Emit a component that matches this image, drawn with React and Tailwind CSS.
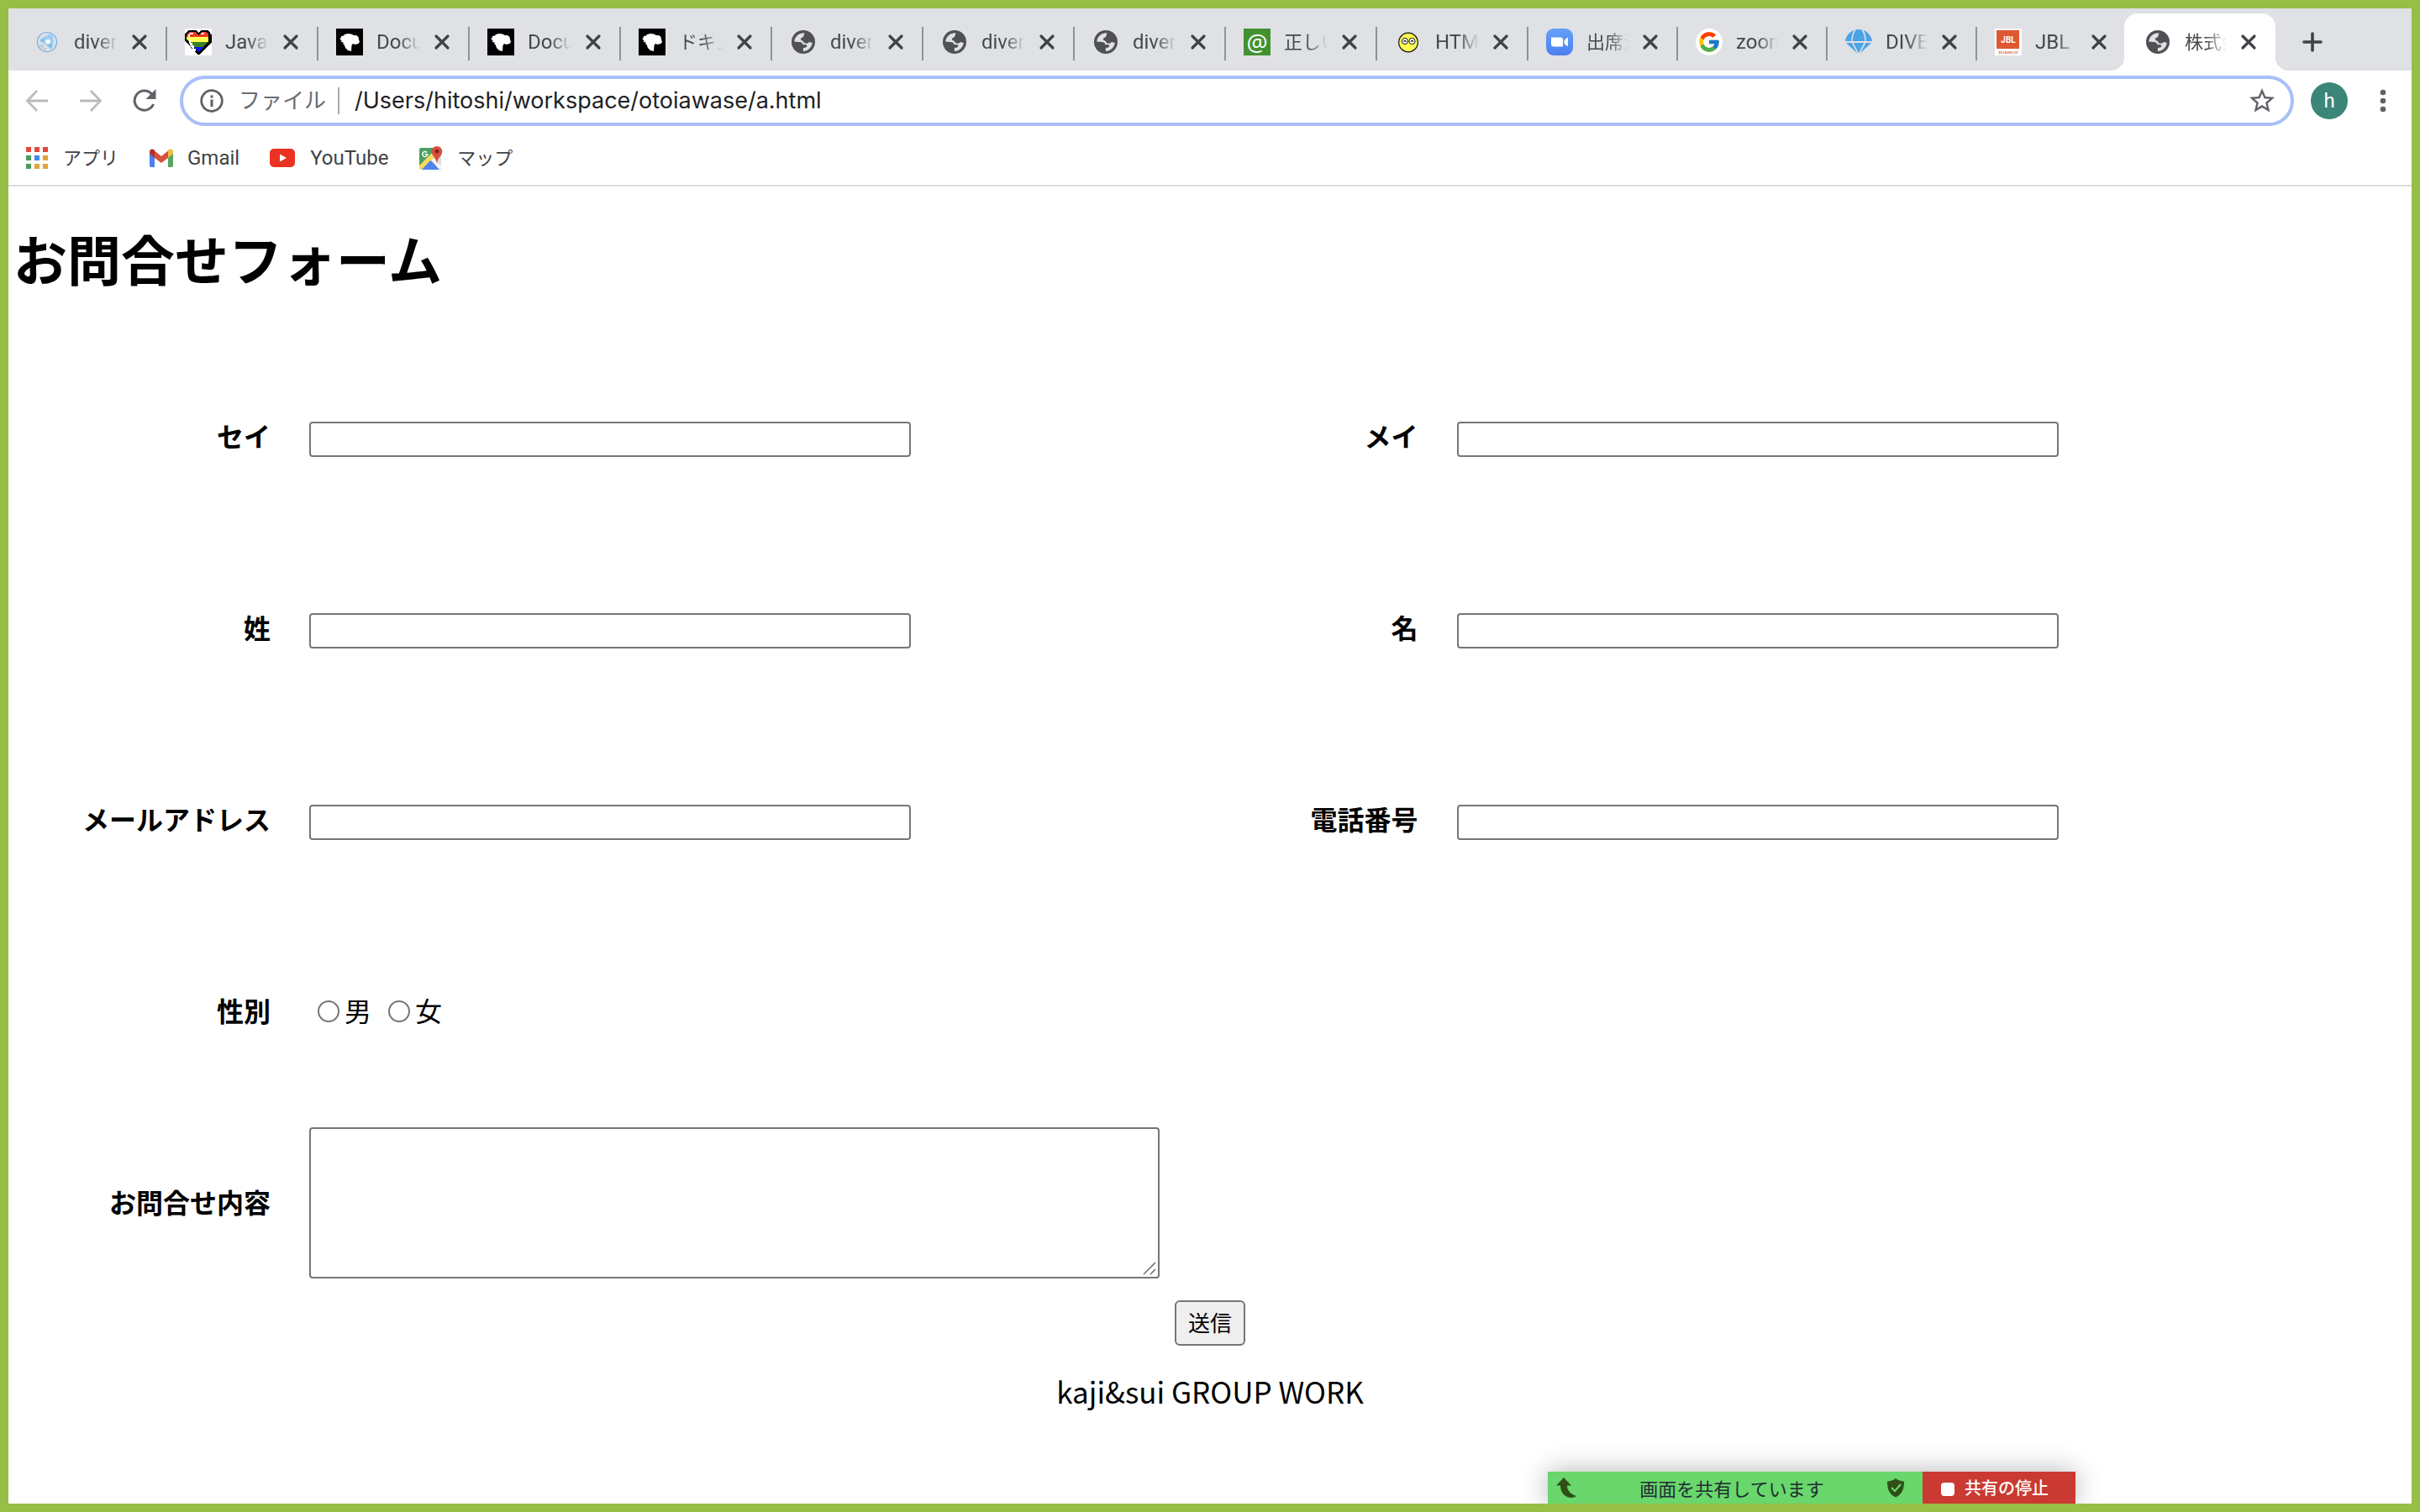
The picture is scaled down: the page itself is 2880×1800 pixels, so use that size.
import React from "react";
import { FcGoogle } from "react-icons/fc";
import { MdStarBorder } from "react-icons/md";

const cjk = "font-['Noto_Sans_CJK_JP',sans-serif]";
const ui = "font-[Roboto,'Noto_Sans_CJK_JP',sans-serif]";

function Rocket() {
  return (
    <svg viewBox="0 0 32 32" className="size-8">
      <circle cx="16" cy="16" r="11.5" fill="none" stroke="#6fb1e6" strokeWidth="1.2" />
      <path d="M22 6c2 5 2 12 0 17-2-1-4-1-6-3-3-1-6-4-8-7 4-3 9-6 14-7z" fill="#9dcdf3" />
      <path d="M13 11l-6 3 4 3zM16 20l5 5 1-7z" fill="#7dbcee" />
      <circle cx="17" cy="15.5" r="2.800" fill="#fff" />
      <path d="M7 22l4-3M8 26l4-5M13 26l1-3" stroke="#c2c6ca" strokeWidth="2" />
    </svg>
  );
}

function Heart() {
  return (
    <svg viewBox="0 0 32 32" className="size-8" shapeRendering="crispEdges">
      <rect width="32" height="32" fill="#fff" />
      <path d="M4 2h9l3 3 3-3h9l4 6v8L18 31h-3L0 14V7z" fill="#000" />
      <path d="M5 4h7l4 4 4-4h6l2 3v3H2V7z" fill="#ee3424" />
      <path d="M2 10h26v5l-1 1H5l-3-3z" fill="#ffff54" />
      <path d="M5 16h22l-5 6H10z" fill="#3b8222" />
      <path d="M10 22h12l-6 6z" fill="#0a16f0" />
      <path d="M7 5h3v2H6v3H4V7zM20 5h3v2h-4zM5 13h2v4h2v3h2v4h2v3h-2l-4-6-2-4z" fill="#fff" />
    </svg>
  );
}

function Lion() {
  return (
    <svg viewBox="0 0 32 32" className="size-8">
      <rect width="32" height="32" fill="#000" />
      <path d="M4 12l2-1.500V9l3-.5 1-1.500 4-1 4 .5 3 1.500h3l2.500 2 .5 3 1 3-1.500 2-4 1-2.500-1-1.500 2-.5 7-4-1-3-3-1.500-4L8 18l1-1.500-3.500-.5 1.500-1.500-2.500-1 1.500-1z" fill="#fff" />
    </svg>
  );
}

function Globe() {
  return (
    <svg viewBox="0 0 32 32" className="size-8">
      <circle cx="16" cy="16" r="14" fill="#505155" />
      <path d="M17.500 5.200C11 5 6 9 5.200 15.500L11 16c3 0 4 1 4.200 3l4 .3c1.500.4 1.300 2.700-.2 3.200l-3 .5-.2 4C21.500 27 26 22.500 26.800 17l-3.800-1-2.200 1.800-4-.6-.6-2c-1-1-3-.7-3.300-2.200-.2-1.400 1.300-2.500 3-2.800z" fill="#dfe1e5" />
    </svg>
  );
}

function AtMark() {
  return (
    <span className="flex size-8 items-center justify-center bg-[#429232] font-['Open_Sans',sans-serif] text-[28px] leading-none text-white">
      @
    </span>
  );
}

function Smiley() {
  return (
    <svg viewBox="0 0 32 32" className="size-8">
      <circle cx="16" cy="16.500" r="11.300" fill="#ffff54" stroke="#111" strokeWidth="1.200" />
      <circle cx="12" cy="15" r="3.600" fill="#fff" stroke="#111" strokeWidth="1" />
      <circle cx="20.500" cy="15" r="3.600" fill="#fff" stroke="#111" strokeWidth="1" />
      <path d="M11 16v-1.500h2V16M19.500 16v-1.500h2V16" fill="none" stroke="#111" />
    </svg>
  );
}

function ZoomCamera() {
  return (
    <svg viewBox="0 0 32 32" className="size-8">
      <defs>
        <linearGradient id="zoomBlue" x1="0" y1="0" x2="0" y2="1">
          <stop offset="0" stopColor="#65a0f8" />
          <stop offset="1" stopColor="#4c80f0" />
        </linearGradient>
      </defs>
      <rect width="32" height="32" rx="9" fill="url(#zoomBlue)" />
      <path d="M6 10.500h11.500c1.500 0 2.500 1 2.500 2.500v8.500H9c-2 0-3-1-3-3zM21.500 14l4.500-3.500v11L21.500 18z" fill="#fff" />
    </svg>
  );
}

function GoogleMark() {
  return (
    <span className="flex size-8 items-center justify-center rounded-full bg-white">
      <FcGoogle className="size-7" />
    </span>
  );
}

function DiveGlobe() {
  return (
    <svg viewBox="0 0 32 32" className="size-8">
      <path d="M0 15C1 7 8 1 16 1s15 6 16 14zM1 17h30L16 31z" fill="#4ba3e8" />
      <path d="M12 1C9 5 8 10 8 16l8 15 8-15c0-6-1-11-4-15M0 16h32" fill="none" stroke="#dfe1e5" strokeWidth="1.600" />
    </svg>
  );
}

function Jbl() {
  return (
    <svg viewBox="0 0 32 32" className="size-8">
      <rect width="32" height="32" fill="#fff" />
      <rect x="2" y="2" width="27" height="22" fill="#de5833" />
      <text x="16" y="17" textAnchor="middle" fontFamily="Roboto" fontWeight="700" fontSize="10" fill="#fff">JBL</text>
      <text x="16" y="30" textAnchor="middle" fontFamily="Liberation Serif" fontWeight="700" fontSize="5" fill="#de5833">HARMAN</text>
    </svg>
  );
}

const tabs = [
  { title: "diver", Icon: Rocket },
  { title: "Java", Icon: Heart },
  { title: "Docu", Icon: Lion },
  { title: "Docu", Icon: Lion },
  { title: "ドキュ", Icon: Lion, wide: true },
  { title: "diver", Icon: Globe },
  { title: "diver", Icon: Globe },
  { title: "diver", Icon: Globe },
  { title: "正しい", Icon: AtMark, wide: true },
  { title: "HTM", Icon: Smiley },
  { title: "出席法", Icon: ZoomCamera, wide: true, narrow: true },
  { title: "zoom", Icon: GoogleMark, narrow: true },
  { title: "DIVE", Icon: DiveGlobe, narrow: true },
  { title: "JBL S", Icon: Jbl, narrow: true, last: true },
];

function TabBody({ title, Icon, wide, narrow }) {
  return (
    <>
      <Icon />
      <span
        className={`ml-4 overflow-hidden whitespace-nowrap text-[#45484c] [mask-image:linear-gradient(to_right,black_50%,transparent)] ${
          wide ? "text-[22px]" : "text-2xl"
        } ${narrow ? "w-[50px]" : "w-[52px]"}`}
      >
        {title}
      </span>
      <button aria-label="タブを閉じる" className="ml-4 flex size-5 items-center justify-center">
        <svg viewBox="0 0 20 20" className="size-5">
          <path d="M3 3l14 14M17 3L3 17" stroke="#3f4246" strokeWidth="3.200" strokeLinecap="round" />
        </svg>
      </button>
    </>
  );
}

function TabStrip() {
  return (
    <div className="flex items-end bg-[#dfe1e5] pt-1.5 pl-[9px]">
      {tabs.map((t, i) => (
        <div key={i} className={`flex h-[68px] min-w-0 items-center ${t.narrow ? "w-[178px]" : "w-[180px]"}`}>
          <div className="flex min-w-0 flex-1 items-center pl-[21px]">
            <TabBody {...t} />
          </div>
          {!t.last && <span className="mt-1 h-10 w-0.5 bg-[#909296]" />}
        </div>
      ))}
      <div className="relative -ml-[3px] flex h-[68px] w-[180px] items-center rounded-t-2xl bg-white pl-6">
        <span className="absolute bottom-0 -left-4 size-4 bg-[radial-gradient(circle_at_0_0,transparent_16px,white_16px)]" />
        <span className="absolute -right-4 bottom-0 size-4 bg-[radial-gradient(circle_at_100%_0,transparent_16px,white_16px)]" />
        <TabBody title="株式会" Icon={Globe} wide narrow />
      </div>
      <button aria-label="新しいタブ" className="ml-7 flex h-[68px] w-8 items-center justify-center">
        <svg viewBox="0 0 24 24" className="size-6">
          <path d="M12 2v20M2 12h20" stroke="#3f4246" strokeWidth="3.600" strokeLinecap="round" />
        </svg>
      </button>
    </div>
  );
}

function Toolbar() {
  return (
    <div className="flex items-center bg-white pt-1.5 pr-[22px] pl-5">
      <button aria-label="戻る">
        <svg viewBox="0 0 28 28" className="size-7" fill="none" stroke="#babcbe" strokeWidth="2.800">
          <path d="M27 14H3M14 2L2.500 14 14 26" />
        </svg>
      </button>
      <button aria-label="進む" className="ml-9">
        <svg viewBox="0 0 28 28" className="size-7" fill="none" stroke="#babcbe" strokeWidth="2.800">
          <path d="M1 14h24M14 2l11.500 12L14 26" />
        </svg>
      </button>
      <button aria-label="再読み込み" className="ml-9">
        <svg viewBox="0 0 28 28" className="size-7">
          <path d="M24.500 18A11.600 11.600 0 1 1 22.500 6" fill="none" stroke="#5f6368" strokeWidth="3" />
          <path d="M27.500 0v12h-12z" fill="#5f6368" />
        </svg>
      </button>
      <div className="ml-7 flex h-[60px] flex-1 items-center rounded-full border-4 border-[#a8c0f7] pr-4 pl-5">
        <svg viewBox="0 0 28 28" className="size-7">
          <circle cx="14" cy="14" r="12.300" fill="none" stroke="#616161" strokeWidth="2.800" />
          <path d="M12.500 12.500h3V21h-3zM12.500 7.500h3v3h-3z" fill="#616161" />
        </svg>
        <span className="ml-[18px] text-[26px] text-[#6a6d71]">ファイル</span>
        <span className="ml-3.5 h-8 w-0.5 bg-[#a8aaad]" />
        <input
          aria-label="アドレス"
          defaultValue="/Users/hitoshi/workspace/otoiawase/a.html"
          className="ml-[18px] min-w-0 flex-1 bg-transparent font-[Inter,sans-serif] text-[27px] text-[#202124] outline-none"
        />
        <button aria-label="ブックマークに追加">
          <MdStarBorder className="size-9 text-[#5f6368]" />
        </button>
      </div>
      <button className="ml-5 flex size-11 items-center justify-center rounded-full bg-[#3b8678] text-2xl text-white">h</button>
      <button aria-label="メニュー" className="ml-[30px] flex w-6 justify-center">
        <svg viewBox="0 0 8 28" className="h-7 w-2" fill="#5f6368">
          <circle cx="4" cy="4" r="3.300" />
          <circle cx="4" cy="14" r="3.300" />
          <circle cx="4" cy="24" r="3.300" />
        </svg>
      </button>
    </div>
  );
}

function Apps() {
  const colors = ["#e2473c", "#e2473c", "#e2473c", "#4b9b5a", "#4285f4", "#e4a338", "#4b9b5a", "#e4a338", "#e4a338"];
  return (
    <svg viewBox="0 0 26 26" className="size-[26px]">
      {colors.map((c, i) => (
        <rect key={i} x={(i % 3) * 10} y={Math.floor(i / 3) * 10} width="6" height="6" fill={c} />
      ))}
    </svg>
  );
}

function Gmail() {
  return (
    <svg viewBox="0 0 30 22" className="h-[22px] w-[30px]">
      <path d="M1 4l6 5v13H3a2 2 0 0 1-2-2z" fill="#4c80ee" />
      <path d="M29 4l-6 5v13h4a2 2 0 0 0 2-2z" fill="#58a65c" />
      <path d="M23 2l1-1c2-1.500 5 0 5 2.500V6l-6 5z" fill="#f0bd42" />
      <path d="M7 2.500l8 6.500 8-6.500V11l-8 6-8-6z" fill="#d85140" />
      <path d="M1 3.500C1 1 4 -.5 6 1l1 1v9L1 6z" fill="#b3322a" />
    </svg>
  );
}

function YouTube() {
  return (
    <svg viewBox="0 0 30 22" className="h-[22px] w-[30px]">
      <rect width="30" height="22" rx="5" fill="#ea3323" />
      <path d="M12 6.500l8 4.500-8 4.500z" fill="#fff" />
    </svg>
  );
}

function Maps() {
  return (
    <svg viewBox="0 0 30 30" className="size-[30px]">
      <rect x="1" y="3" width="26" height="26" rx="2.500" fill="#dcdde0" />
      <path d="M3.500 3H20L14 16 1 27V5.500A2.500 2.500 0 0 1 3.500 3z" fill="#4c9f63" />
      <path d="M14 16l12 13H3z" fill="#5083ec" />
      <path d="M1 24L16 9l3 6L4 29H3a2 2 0 0 1-2-2z" fill="#f8da5a" />
      <path d="M14 18l11 11H4z" fill="#5083ec" />
      <path d="M15 18l3-3 9 10v2l-2 2z" fill="#f4f4f5" />
      <path d="M22 1a6.300 6.300 0 0 1 6.300 6.300C28.300 13 23 14 22 22c-1-8-6.300-9-6.300-14.700A6.300 6.300 0 0 1 22 1z" fill="#d5503f" />
      <circle cx="22" cy="7.300" r="2.300" fill="#702419" />
      <path d="M10 8.500a3 3 0 1 0 .8 2.200H7.800" fill="none" stroke="#fff" strokeWidth="1.400" />
    </svg>
  );
}

function Bookmarks() {
  const item = "flex items-center text-[#3f4246]";
  return (
    <nav className="flex h-[72px] items-center border-b-2 border-[#dbdce1] bg-white pt-1.5 pl-[21px]">
      <a href="#apps" className={item}>
        <Apps />
        <span className="ml-[18px] text-[22px]">アプリ</span>
      </a>
      <a href="#gmail" className={`${item} ml-9`}>
        <Gmail />
        <span className="ml-4 text-2xl">Gmail</span>
      </a>
      <a href="#youtube" className={`${item} ml-9`}>
        <YouTube />
        <span className="ml-[18px] text-2xl">YouTube</span>
      </a>
      <a href="#maps" className={`${item} ml-9`}>
        <Maps />
        <span className="ml-4 text-[22px]">マップ</span>
      </a>
    </nav>
  );
}

function Field({ id, label, type = "text" }) {
  return (
    <>
      <label htmlFor={id} className="pb-1 text-right font-bold">{label}</label>
      <div className="pt-1.5">
        <input id={id} type={type} className="block h-[42px] w-[716px] max-w-full rounded border-2 border-[#767676] bg-white px-1" />
      </div>
    </>
  );
}

function Radio({ label }) {
  return (
    <label className="flex items-center">
      <input type="radio" name="gender" className="mr-1.5 size-[26px] appearance-none rounded-full border-2 border-[#767676] bg-white checked:bg-[#767676]" />
      <span className="pb-1">{label}</span>
    </label>
  );
}

function ContactForm() {
  return (
    <form onSubmit={(e) => e.preventDefault()}>
      <div className="grid auto-rows-[228px] grid-cols-[312px_11fr_312px_13fr] items-center gap-x-[46px] text-[32px]">
        <Field id="sei-kana" label="セイ" />
        <Field id="mei-kana" label="メイ" />
        <Field id="sei" label="姓" />
        <Field id="mei" label="名" />
        <Field id="mail" label="メールアドレス" type="email" />
        <Field id="tel" label="電話番号" type="tel" />
        <span className="pb-1 text-right font-bold">性別</span>
        <div className="col-span-3 flex gap-5 pl-2.5">
          <Radio label="男" />
          <Radio label="女" />
        </div>
        <label htmlFor="body" className="pb-1 text-right font-bold">お問合せ内容</label>
        <div className="relative col-span-3 w-[1012px] max-w-full">
          <textarea id="body" className="block h-[180px] w-full resize-none rounded border-2 border-[#767676] bg-white p-1" />
          <svg viewBox="0 0 16 16" className="pointer-events-none absolute right-1 bottom-1 size-4">
            <path d="M1 15L15 1M9 15l6-6" stroke="#6b6b6b" strokeWidth="1.500" />
          </svg>
        </div>
      </div>
      <div className="mt-0.5 flex justify-center">
        <button type="submit" className="h-[54px] w-[84px] rounded-md border-2 border-[#767676] bg-[#efefef] pb-1 text-[26px]">送信</button>
      </div>
    </form>
  );
}

function ShareBar() {
  return (
    <div className={`absolute right-[400px] bottom-0 flex h-[38px] rounded-b-sm shadow-[0_0_32px_rgba(0,0,0,0.3)] ${cjk}`}>
      <div className="flex w-[446px] items-center justify-between bg-[#69d76b] pr-[22px] pl-2.5 text-[22px] text-[#1f2c33]">
        <svg viewBox="0 0 24 24" className="size-6">
          <path d="M9 0l9 9.500h-5c0 6 4 10 11 12.500-2 2-6 2.500-10 1.500C8 21 5 16 5 9.500H0z" fill="#2f4f17" />
        </svg>
        <span>画面を共有しています</span>
        <svg viewBox="0 0 20 24" className="h-6 w-5">
          <path d="M10 1c3 2.500 6 3.200 10 3.500 0 9-2 15-10 19C2 19.500 0 13.500 0 4.500 4 4.200 7 3.500 10 1z" fill="#2f4f17" />
          <path d="M5 12l4 4 7-8" fill="none" stroke="#69d76b" strokeWidth="2.200" />
        </svg>
      </div>
      <button className="flex w-[182px] items-center bg-[#ca3a32] pl-[22px] text-xl font-medium text-white">
        <span className="mt-1 size-4 rounded-sm bg-white" />
        <span className="ml-3">共有の停止</span>
      </button>
    </div>
  );
}

export default function App() {
  return (
    <div className={`relative min-h-screen overflow-hidden border-10 border-[#97be46] bg-white text-black ${ui}`}>
      <TabStrip />
      <Toolbar />
      <Bookmarks />
      <main className={cjk}>
        <h1 className="pt-9 pb-[52px] pl-1.5 text-[64px] leading-[96px] font-bold">お問合せフォーム</h1>
        <ContactForm />
        <footer className="mt-7 text-center text-[35px]">kaji&amp;sui GROUP WORK</footer>
      </main>
      <ShareBar />
    </div>
  );
}
